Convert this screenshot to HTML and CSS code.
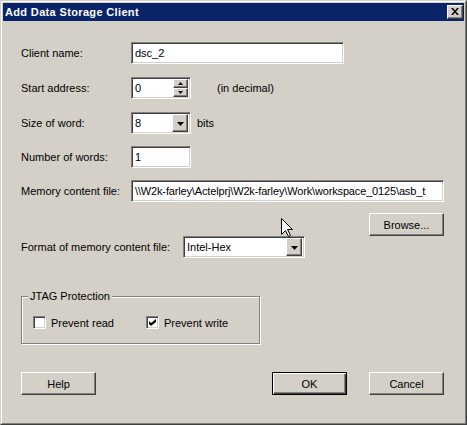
FILE: index.html
```html
<!DOCTYPE html>
<html lang="en">
<head>
  <meta charset="UTF-8">
  <title>Add Data Storage Client</title>
  <link rel="stylesheet" href="styles.css">
</head>
<body>
  <div class="window">
    <div class="frame">
      <div class="titlebar">
        <span class="title">Add Data Storage Client</span>
        <div class="close raised">
          <svg width="8" height="7" viewBox="0 0 8 7"><path d="M0 0h2l2 2.5L6 0h2L5 3.5 8 7H6L4 4.5 2 7H0l3-3.5z" fill="#000"/></svg>
        </div>
      </div>

      <div class="client">
        <div class="row row-name">
          <span class="label">Client name:</span>
          <div class="field sunken name-field">dsc_2</div>
        </div>

        <div class="row row-addr">
          <span class="label">Start address:</span>
          <div class="field sunken small-field">
            <span class="value">0</span>
            <div class="spin">
              <div class="spin-btn raised"><svg width="5" height="3" viewBox="0 0 5 3"><path d="M2.5 0L5 3H0z" fill="#000"/></svg></div>
              <div class="spin-btn raised"><svg width="5" height="3" viewBox="0 0 5 3"><path d="M0 0h5L2.5 3z" fill="#000"/></svg></div>
            </div>
          </div>
          <span class="hint">(in decimal)</span>
        </div>

        <div class="row row-size">
          <span class="label">Size of word:</span>
          <div class="field sunken small-field">
            <span class="value">8</span>
            <div class="drop raised"><svg width="7" height="4" viewBox="0 0 7 4"><path d="M0 0h7L3.5 4z" fill="#000"/></svg></div>
          </div>
          <span class="unit">bits</span>
        </div>

        <div class="row row-count">
          <span class="label">Number of words:</span>
          <div class="field sunken small-field">1</div>
        </div>

        <div class="row row-file">
          <span class="label">Memory content file:</span>
          <div class="field sunken path-field"><span class="path">\\W2k-farley\Actelprj\W2k-farley\Work\workspace_0125\asb_t</span></div>
        </div>

        <div class="row row-browse">
          <div class="btn raised">Browse...</div>
        </div>

        <div class="row row-format">
          <span class="label format-label">Format of memory content file:</span>
          <div class="field sunken format-field">
            <span class="value">Intel-Hex</span>
            <div class="drop raised"><svg width="7" height="4" viewBox="0 0 7 4"><path d="M0 0h7L3.5 4z" fill="#000"/></svg></div>
          </div>
        </div>

        <div class="group">
          <span class="group-title">JTAG Protection</span>
          <div class="checks">
            <div class="check">
              <span class="box sunken"></span>
              <span>Prevent read</span>
            </div>
            <div class="check">
              <span class="box sunken"><svg width="7" height="7" viewBox="0 0 7 7"><path d="M0 2l2 2 5-4v3L2 7 0 5z" fill="#000"/></svg></span>
              <span>Prevent write</span>
            </div>
          </div>
        </div>

        <div class="buttons">
          <div class="btn raised">Help</div>
          <div class="btn raised default">OK</div>
          <div class="btn raised">Cancel</div>
        </div>
      </div>
    </div>

    <!-- mouse pointer -->
    <svg class="pointer" width="12" height="20" viewBox="0 0 12 20">
      <path d="M0.5 0.5V16.5L4.5 12.5L7.5 18.5L9.5 17.5L6.5 11.5H11.5Z" fill="#fff" stroke="#000"/>
    </svg>
  </div>
</body>
</html>
```

FILE: styles.css
```css
body {
  margin: 0;
  background: #d4d0c8;
  font-family: "Liberation Sans", Arial, sans-serif;
  font-size: 11px;
  color: #000;
}
.window {
  position: relative;
  width: 467px;
  height: 425px;
  box-sizing: border-box;
  border: 1px solid;
  border-color: #d4d0c8 #404040 #404040 #d4d0c8;
  background: #d4d0c8;
}
.frame {
  height: 100%;
  box-sizing: border-box;
  border: 1px solid;
  border-color: #fff #808080 #808080 #fff;
  padding: 1px;
}

/* bevels */
.raised {
  background: #d4d0c8;
  box-sizing: border-box;
  border: 1px solid;
  border-color: #fff #404040 #404040 #fff;
  box-shadow: inset -1px -1px 0 #808080;
}
.sunken {
  background: #fff;
  box-sizing: border-box;
  border: 1px solid;
  border-color: #808080 #fff #fff #808080;
  box-shadow: inset 1px 1px 0 #404040, inset -1px -1px 0 #d4d0c8;
}

.titlebar {
  height: 18px;
  background: #0a246a;
  display: flex;
  align-items: center;
  padding-left: 2px;
}
.title {
  flex: 1;
  color: #fff;
  font-weight: bold;
  letter-spacing: 0.35px;
}
.close {
  width: 16px;
  height: 14px;
  margin-right: 1px;
  display: flex;
  align-items: center;
  justify-content: center;
}
.close svg {
  margin-left: -1px;
  margin-top: -1px;
}

.client {
  height: 401px;
  box-sizing: border-box;
  padding: 21px 20px 0 18px;
}
.row {
  display: flex;
  align-items: center;
  height: 22px;
}
.label {
  width: 110px;
  flex: none;
}
.row-addr { margin-top: 13px; }
.row-size { margin-top: 13px; }
.row-count { margin-top: 12px; }
.row-file { margin-top: 12px; }

.field {
  height: 22px;
  display: flex;
  align-items: center;
  padding-left: 3px;
  white-space: nowrap;
  overflow: hidden;
}
.field .value {
  flex: 1;
}
.name-field { width: 213px; }
.small-field { width: 60px; padding-right: 2px; }
.path-field { width: 313px; }
.path { letter-spacing: -0.15px; }
.format-field { width: 122px; padding-right: 2px; }

.spin {
  display: flex;
  flex-direction: column;
  width: 15px;
  height: 18px;
}
.spin-btn {
  height: 9px;
  display: flex;
  align-items: center;
  justify-content: center;
}
.drop {
  width: 16px;
  height: 18px;
  display: flex;
  align-items: center;
  justify-content: center;
}
.drop svg { margin-top: 1px; }

.hint { margin-left: 26px; }
.unit { margin-left: 6px; }

.row-browse {
  margin-top: 11px;
  height: 23px;
  justify-content: flex-end;
}
.row-format {
  height: 22px;
}
.format-label { width: 162px; }

.btn {
  width: 75px;
  height: 23px;
  display: flex;
  align-items: center;
  justify-content: center;
}
.btn.default {
  border-color: #000;
  box-shadow: inset 1px 1px 0 #fff, inset -1px -1px 0 #404040, inset -2px -2px 0 #808080;
}

.group {
  position: relative;
  margin-top: 38px;
  width: 239px;
  height: 48px;
  box-sizing: border-box;
  border: 1px solid #808080;
  box-shadow: inset 1px 1px 0 #fff, 1px 1px 0 #fff;
}
.group-title {
  position: absolute;
  top: -7px;
  left: 6px;
  padding: 0 2px;
  background: #d4d0c8;
}
.checks {
  display: flex;
  padding: 19px 0 0 11px;
}
.check {
  width: 122px;
  display: flex;
  align-items: center;
  gap: 5px;
}
.box {
  width: 13px;
  height: 13px;
  display: flex;
  align-items: center;
  justify-content: center;
}

.buttons {
  display: flex;
  margin-top: 28px;
}
.buttons .default { margin-left: auto; margin-right: 22px; }

.pointer {
  position: absolute;
  left: 280px;
  top: 217px;
}
```
